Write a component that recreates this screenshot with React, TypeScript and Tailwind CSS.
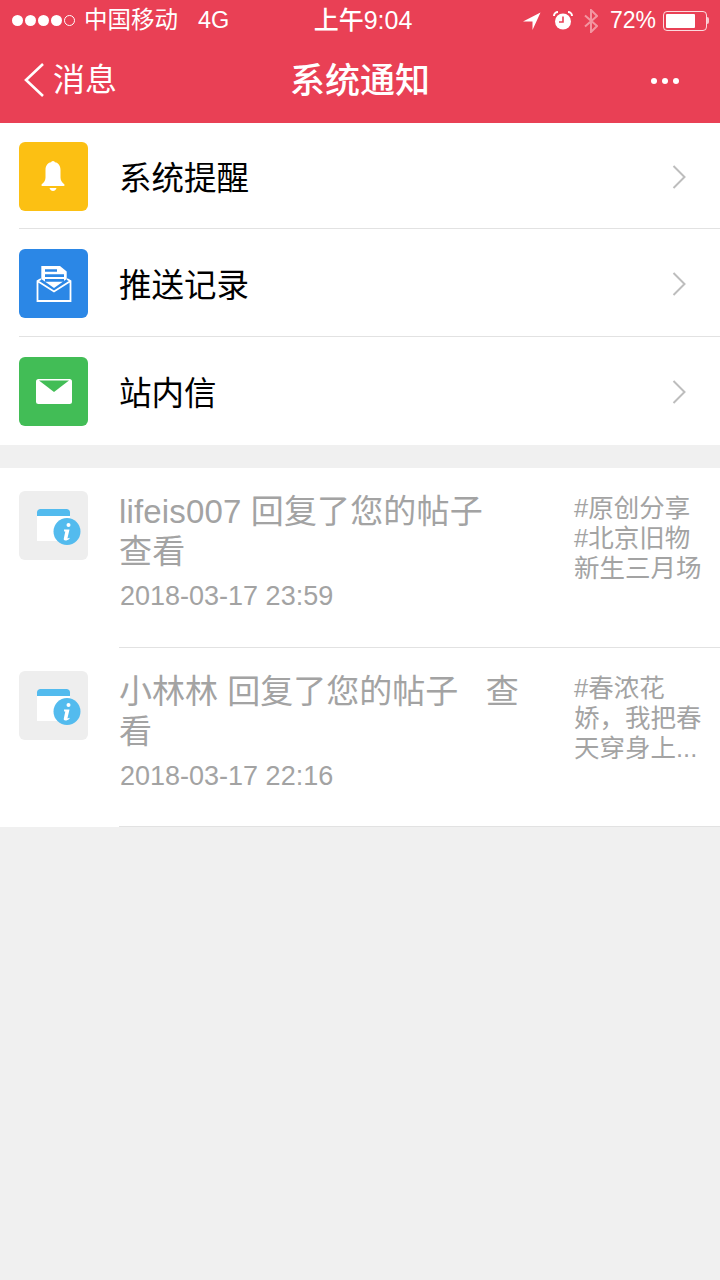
const FONT = "font-['Liberation_Sans','Noto_Sans_CJK_SC',sans-serif]";

function BellIcon() {
  return (
    <svg width="26" height="34" viewBox="0 0 26 34" fill="white" className="-ml-[2px]">
      <circle cx="13" cy="3" r="2" />
      <path d="M13 2c-5 0-7.500 3.500-7.500 8v7.500c0 3-1.500 5-3.500 6.500-1 .800-.800 2 .500 2h21c1.300 0 1.500-1.200.500-2-2-1.500-3.500-3.500-3.500-6.500V10c0-4.500-2.500-8-7.500-8z" />
      <path d="M9.500 28h7c-.500 2-2 3-3.500 3s-3-1-3.500-3z" />
    </svg>
  );
}

function InboxIcon() {
  return (
    <svg width="36" height="36" viewBox="0 0 36 36">
      <path d="M5.300 0H24l6.700 5.500V13L18 22 5.300 13z" fill="white" />
      <path d="M9 3.300h12v2.400H9zM9 8.300h19V11H9zM9 13h19v2.700H9z" fill="#2b87e6" />
      <path d="M5 13 1.500 15v20h33V15L31 13M1.500 15 18 25.500 34.500 15" fill="none" stroke="white" strokeWidth="1.800" />
    </svg>
  );
}

function MailIcon() {
  return (
    <svg width="36" height="26" viewBox="0 0 36 26">
      <rect width="36" height="25" rx="2.500" fill="white" />
      <path d="M3 1.500h30L18 13z" fill="#42bd56" />
    </svg>
  );
}

function NoticeIcon() {
  return (
    <svg width="46" height="38" viewBox="0 0 46 38">
      <path d="M1 8V4.500C1 2.500 2.500 1 4.500 1h26c2 0 3.500 1.500 3.500 3.500V8z" fill="#53bbee" />
      <rect x="1" y="8" width="33" height="25" fill="white" />
      <circle cx="31" cy="23.500" r="13.500" fill="#53bbee" />
      <circle cx="32.500" cy="17" r="2" fill="white" />
      <path d="M28 21.500h5.500l-2 8.500c-.100.600.400.700 1.800-.300l.400.700c-1.500 1.500-3 2-4.200 2-1.400 0-2-.800-1.700-2l1.500-7c-.500 0-1 0-1.200.100z" fill="white" />
    </svg>
  );
}

function LocationIcon() {
  return (
    <svg width="18" height="18" viewBox="0 0 18 18" fill="white">
      <path d="M17.500.500 0 9.500h9.500V18z" />
    </svg>
  );
}

function AlarmIcon() {
  return (
    <svg width="20" height="19" viewBox="0 0 20 19">
      <circle cx="10" cy="10.500" r="8" fill="white" />
      <path d="M10 5.500v5.500H6" stroke="#e94055" strokeWidth="1.600" fill="none" />
      <path d="M1 5a4 4 0 0 1 4-4M19 5a4 4 0 0 0-4-4" stroke="white" strokeWidth="2" fill="none" />
    </svg>
  );
}

function BluetoothIcon() {
  return (
    <svg width="14" height="24" viewBox="0 0 14 24" fill="none" stroke="white" strokeOpacity="0.45" strokeWidth="2">
      <path d="M1 6.500 13 17l-6 6V1l6 6L1 17.500" />
    </svg>
  );
}

function Dots() {
  return (
    <div className="mt-[2px] flex items-center gap-[5px]">
      {[0, 1, 2].map((i) => (
        <span key={i} className="w-[6px] h-[6px] rounded-full bg-white" />
      ))}
    </div>
  );
}

const menu = [
  { label: '系统提醒', bg: 'bg-[#fcc013]', icon: <BellIcon />, row: 'h-[106px] pt-[19px] border-b border-[#e2e2e2]' },
  { label: '推送记录', bg: 'bg-[#2b87e6]', icon: <InboxIcon />, row: 'h-[108px] pt-[20px] border-b border-[#e2e2e2]' },
  { label: '站内信', bg: 'bg-[#42bd56]', icon: <MailIcon />, row: 'h-[108px] pt-[20px]' },
];

const notices = [
  {
    title: ['lifeis007 回复了您的帖子', '查看'],
    titleClass: 'tracking-[0.15px]',
    time: '2018-03-17 23:59',
    tag: ['#原创分享', '#北京旧物', '新生三月场'],
    row: 'h-[180px]',
  },
  {
    title: ['小林林 回复了您的帖子\u00a0 \u00a0查', '看'],
    titleClass: '',
    time: '2018-03-17 22:16',
    tag: ['#春浓花', '娇，我把春', '天穿身上...'],
    row: 'h-[179px]',
  },
];

export default function App() {
  return (
    <div className={`${FONT} w-[720px] h-[1280px] bg-[#f0f0f0] flex flex-col`}>
      <header className="bg-[#e94055] text-white h-[123px] flex flex-col shrink-0">
        <div className="h-[40px] pt-[1px] flex items-center justify-between pl-[12px] pr-[11px]">
          <div className="flex items-center w-[285px]">
            <div className="flex items-center gap-[2px]">
              {[0, 1, 2, 3].map((i) => (
                <span key={i} className="w-[11px] h-[11px] rounded-full bg-white" />
              ))}
              <span className="w-[11px] h-[11px] rounded-full border border-white" />
            </div>
            <span className="ml-[9px] text-[23.500px]">中国移动</span>
            <span className="ml-[20px] text-[23.500px]">4G</span>
          </div>
          <span className="text-[25px] font-medium">上午9:04</span>
          <div className="flex items-center justify-end w-[280px]">
            <LocationIcon />
            <span className="ml-[12px]"><AlarmIcon /></span>
            <span className="ml-[11px]"><BluetoothIcon /></span>
            <span className="ml-[12px] text-[23px]">72%</span>
            <div className="ml-[7px] flex items-center">
              <div className="w-[44px] h-[20px] border border-white/80 rounded-[4px] p-[2px]">
                <div className="w-[29px] h-full bg-white rounded-[1px]" />
              </div>
              <span className="w-[2px] h-[7px] bg-white/70 rounded-r-sm" />
            </div>
          </div>
        </div>
        <div className="flex-1 flex items-center justify-between pl-[24px] pr-[41px] pb-[3px]">
          <div className="flex items-center w-[200px]">
            <svg width="20" height="34" viewBox="0 0 20 34" fill="none" stroke="white" strokeWidth="2.600">
              <path d="M19 1 2 17l17 16" />
            </svg>
            <span className="ml-[9px] text-[32px] leading-none">消息</span>
          </div>
          <span className="text-[35px] font-medium leading-none">系统通知</span>
          <div className="w-[183px] flex justify-end">
            <Dots />
          </div>
        </div>
      </header>

      <section className="bg-white">
        {menu.map((item) => (
          <div key={item.label} className={`ml-[19px] flex items-start ${item.row}`}>
            <div className={`w-[69px] h-[69px] rounded-[6px] flex items-center justify-center ${item.bg}`}>
              {item.icon}
            </div>
            <div className="ml-[31px] flex-1 h-[69px] flex items-center justify-between">
              <span className="mt-[5px] text-[32.500px] leading-none text-black">{item.label}</span>
              <svg width="14" height="24" viewBox="0 0 14 24" fill="none" stroke="#bdbdbd" strokeWidth="2" className="mr-[34px]">
                <path d="M1.500 1 12.500 12 1.500 23" />
              </svg>
            </div>
          </div>
        ))}
      </section>

      <section className="mt-[23px] bg-white">
        {notices.map((n) => (
          <div key={n.time} className={`flex pl-[19px] ${n.row}`}>
            <div className="mt-[23px] w-[69px] h-[69px] rounded-[6px] bg-[#eeeeee] flex items-center justify-center shrink-0">
              <span className="ml-[11px] mt-[3px]"><NoticeIcon /></span>
            </div>
            <div className="ml-[31px] flex-1 border-b border-[#e2e2e2] flex pt-[24px]">
              <div className="w-[412px] shrink-0 text-[#a3a3a3]">
                <div className={`text-[33px] leading-[40px] ${n.titleClass}`}>
                  {n.title.map((line) => (
                    <div key={line}>{line}</div>
                  ))}
                </div>
                <div className="mt-[8px] ml-[1px] text-[27px] leading-[32px]">{n.time}</div>
              </div>
              <div className="ml-[43px] mt-[1px] text-[25.500px] leading-[30px] text-[#a3a3a3] whitespace-nowrap">
                {n.tag.map((line) => (
                  <div key={line}>{line}</div>
                ))}
              </div>
            </div>
          </div>
        ))}
      </section>
    </div>
  );
}
